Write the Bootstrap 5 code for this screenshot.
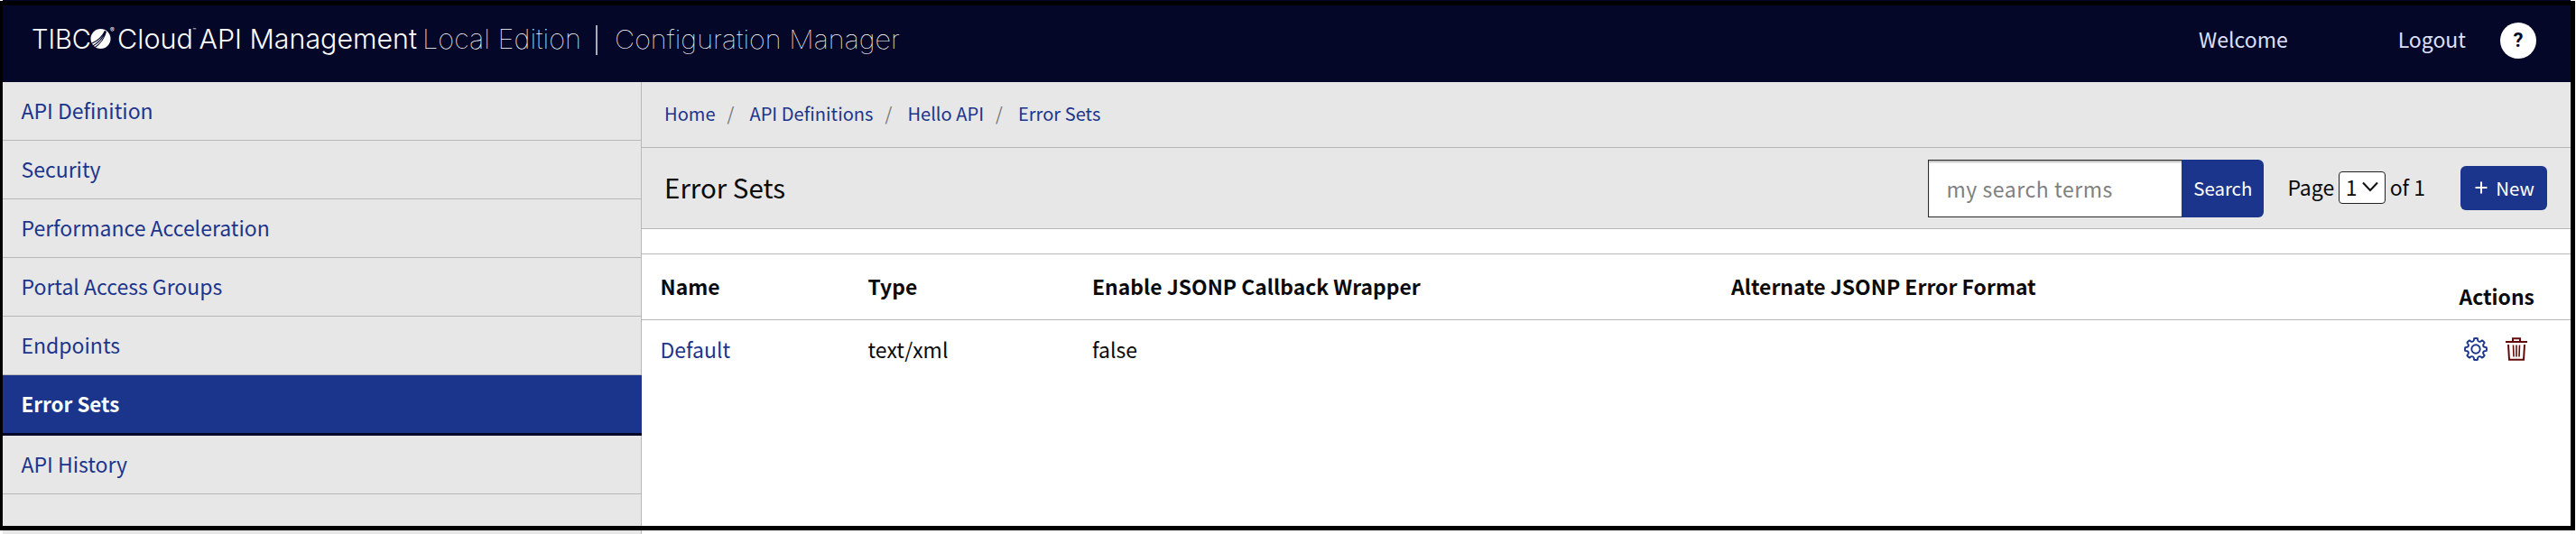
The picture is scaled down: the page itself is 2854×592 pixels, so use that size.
<!DOCTYPE html>
<html lang="en">
<head>
<meta charset="utf-8">
<title>Configuration Manager</title>
<link rel="stylesheet" href="https://cdn.jsdelivr.net/npm/bootstrap@5.3.0/dist/css/bootstrap.min.css">
<script src="https://cdn.jsdelivr.net/npm/bootstrap@5.3.0/dist/js/bootstrap.bundle.min.js"></script>
<style>
  :root { --navy: #050729; --blue: #1c358c; --panel: #e7e7e7; --rule: #b8b8b8; }
  html, body { height: 592px; overflow: hidden; }
  body { font: 23px/34px "Noto Sans CJK SC", sans-serif; color: #0a0a0a; background: #fff; }
  a { color: var(--blue); text-decoration: none; }
  .page { height: 592px; padding: 0 6px 0 3px; }
  .frame { position: absolute; inset: 1px 1px 4px -2px; border: 5px solid #000; pointer-events: none; }
  .topbar { height: 91px; background: var(--navy); color: #dce0fa; padding: 0 38px 0 33px; }
  .topbar a { color: inherit; }
  .brand-logo { display: block; }
  .brand-logo text { font-family: Inter, sans-serif; fill: #fff; }
  .top-links { padding-bottom: 5px; }
  .topbar .help { width: 40px; height: 40px; background: #fff; color: var(--navy); font: 700 22px/40px Roboto, sans-serif; margin-top: 4px; }
  .side { width: 708px; background: var(--panel); border-right: 1px solid var(--rule); }
  .side .nav-item a { display: flex; align-items: center; height: 65px; padding: 0 20.5px 2px; border-bottom: 1px solid var(--rule); }
  .side .nav-item a.active { height: 67px; margin-right: -1px; background: var(--blue); color: #fff; font-weight: 700; font-size: 22.4px; border-bottom: 3px solid var(--navy); }
  .crumbs { height: 73px; background: var(--panel); border-bottom: 1px solid var(--rule); padding: 0 25px 3px; font-size: 20.1px; }
  .crumbs li + li::before { content: "/"; color: #777; padding: 0 17px 0 13px; }
  .titlebar { height: 90px; background: var(--panel); border-bottom: 1px solid var(--rule); padding: 0 26px 0 25px; }
  .titlebar h1 { font-size: 29.5px; line-height: 40px; margin: 0; padding-bottom: 3px; font-weight: 400; }
  .search { height: 64px; width: 372px; margin-right: 26px; }
  .search .form-control { font: 23px/34px "Noto Sans CJK SC", sans-serif; letter-spacing: .56px; border: 1px solid #2b2b2b; border-right: 0; border-radius: 0; padding: 0 0 0 19px; box-shadow: inset 0 2px 2px #bbb; }
  .search .form-control::placeholder { color: #808080; }
  .btn-main { background: var(--blue); color: #fff; font-size: 20.4px; line-height: 30px; border: 0; border-radius: 6px; }
  .search .btn-main { width: 91px; padding: 0 0 2px; }
  .pager { padding-bottom: 3px; }
  .pick { width: 52px; height: 36px; border: 1px solid #222; border-radius: 4px; background: #fff; margin: 2px 5px 0 4.5px; padding: 0 7px 2px 7px; }
  .new-btn { width: 96px; height: 49px; padding: 0 0 2px 2px; margin-left: 39px; }
  .sets { table-layout: fixed; width: 100%; margin: 27px 0 0; border-top: 1px solid var(--rule); border-collapse: separate; border-spacing: 0; }
  .sets th, .sets td { padding: 0; vertical-align: middle; }
  .sets th { height: 73px; border-bottom: 1px solid var(--rule); padding-bottom: 3px; font-weight: 700; font-size: 22.9px; }
  .sets th.act { padding: 19px 0 0; }
  .sets td { height: 64px; padding-bottom: 1px; }
  .sets th:first-child, .sets td:first-child { padding-left: 20.5px; }
</style>
</head>
<body>
<div class="page d-flex flex-column position-relative">
  <header class="topbar d-flex align-items-center justify-content-between">
    <svg class="brand-logo" width="980" height="91" viewBox="36 0 980 91">
      <g font-size="30" font-weight="350">
        <text x="35" y="54" font-size="29.8" textLength="66" lengthAdjust="spacingAndGlyphs">TIBC</text>
        <text x="130" y="54" textLength="84" lengthAdjust="spacingAndGlyphs">Cloud</text>
        <text x="220.500" y="54" textLength="241.500" lengthAdjust="spacingAndGlyphs">API Management</text>
        <text x="468" y="54" font-weight="100" textLength="176" lengthAdjust="spacingAndGlyphs">Local Edition</text>
        <text x="681" y="54" font-size="28.500" font-weight="100" textLength="316" lengthAdjust="spacingAndGlyphs">Configuration Manager</text>
      </g>
      <text x="122" y="35.500" font-size="7">®</text>
      <text x="213.500" y="35.500" font-size="6">™</text>
      <circle cx="111.500" cy="43" r="11" fill="#fff"/>
      <path d="M101 48.500Q112 44 116.500 34M102 51.500Q113.500 45 117 34.500M104 53.500Q115 46 117.500 35" fill="none" stroke="#050729" stroke-width="1.100"/>
      <path d="M661 28v33" stroke="#d5d5de" stroke-width="1.600"/>
    </svg>
    <nav class="top-links d-flex align-items-center">
      <span style="margin-right:122px">Welcome</span>
      <a href="#" style="margin-right:38px">Logout</a>
      <a href="#" class="help rounded-circle text-center">?</a>
    </nav>
  </header>
  <div class="d-flex flex-grow-1">
    <aside class="side flex-shrink-0">
      <ul class="nav flex-column flex-nowrap">
        <li class="nav-item"><a href="#">API Definition</a></li>
        <li class="nav-item"><a href="#">Security</a></li>
        <li class="nav-item"><a href="#">Performance Acceleration</a></li>
        <li class="nav-item"><a href="#">Portal Access Groups</a></li>
        <li class="nav-item"><a href="#">Endpoints</a></li>
        <li class="nav-item"><a href="#" class="active">Error Sets</a></li>
        <li class="nav-item"><a href="#">API History</a></li>
      </ul>
    </aside>
    <main class="flex-grow-1">
      <ol class="crumbs list-unstyled d-flex align-items-center m-0">
        <li><a href="#">Home</a></li>
        <li><a href="#">API Definitions</a></li>
        <li><a href="#">Hello API</a></li>
        <li><a href="#">Error Sets</a></li>
      </ol>
      <div class="titlebar d-flex align-items-center">
        <h1 class="me-auto">Error Sets</h1>
        <div class="search input-group flex-nowrap">
          <input class="form-control" placeholder="my search terms">
          <button class="btn btn-main">Search</button>
        </div>
        <div class="pager d-flex align-items-center text-nowrap">
          <span>Page</span>
          <span class="pick d-flex align-items-center justify-content-between">1
            <svg width="18" height="12" viewBox="0 0 18 12"><path d="M1 1.500l8 8.500 8-8.500" fill="none" stroke="#111" stroke-width="2"/></svg>
          </span>
          <span>of 1</span>
        </div>
        <button class="btn btn-main new-btn d-flex align-items-center justify-content-center">
          <svg width="14" height="14" viewBox="0 0 14 14" style="margin-right:9px"><path d="M7 .5v13M.5 7h13" stroke="#fff" stroke-width="2"/></svg>New
        </button>
      </div>
      <table class="sets">
        <colgroup><col style="width:250.500px"><col style="width:248.500px"><col style="width:708px"><col style="width:806.500px"><col></colgroup>
        <thead><tr><th>Name</th><th>Type</th><th>Enable JSONP Callback Wrapper</th><th>Alternate JSONP Error Format</th><th class="act">Actions</th></tr></thead>
        <tbody><tr>
          <td><a href="#">Default</a></td><td>text/xml</td><td>false</td><td></td>
          <td><div class="d-flex align-items-center ps-1">
            <svg id="gear" width="28" height="28" viewBox="-14 -14 28 28" fill="none" stroke="#1c358c" stroke-width="1.900" stroke-linejoin="round"><circle r="4.700"/></svg>
            <svg style="margin-left:19px" width="24" height="26" viewBox="0 0 24 26" fill="none" stroke="#650a0a"><path d="M0 5h24" stroke-width="2"/><path d="M8 4V1.200h8V4" stroke-width="2"/><path d="M3 8l1 16.800h16L21 8" stroke-width="2"/><path d="M8.500 8.500l.5 13M12 8.500v13M15.500 8.500l-.5 13" stroke-width="1.600"/></svg>
          </div></td>
        </tr></tbody>
      </table>
    </main>
  </div>
  <div class="frame"></div>
</div>
<script>
  // Gear outline: eight rounded teeth around the hub
  let d = '';
  for (let i = 0; i < 8; i++) {
    const a = i * 45, p = (r, t) => { const q = (a + t) * Math.PI / 180; return (r * Math.cos(q)).toFixed(2) + ' ' + (r * Math.sin(q)).toFixed(2); };
    d += (i ? 'L' : 'M') + p(9.8, -13) + 'L' + p(11.9, -9) + 'Q' + p(12.4, 0) + ' ' + p(11.9, 9) + 'L' + p(9.8, 13) + 'Q' + p(8.2, 22.5) + ' ' + p(9.8, 32);
  }
  const g = document.createElementNS('http://www.w3.org/2000/svg', 'path');
  g.setAttribute('d', d + 'Z');
  document.getElementById('gear').appendChild(g);
</script>
</body>
</html>
